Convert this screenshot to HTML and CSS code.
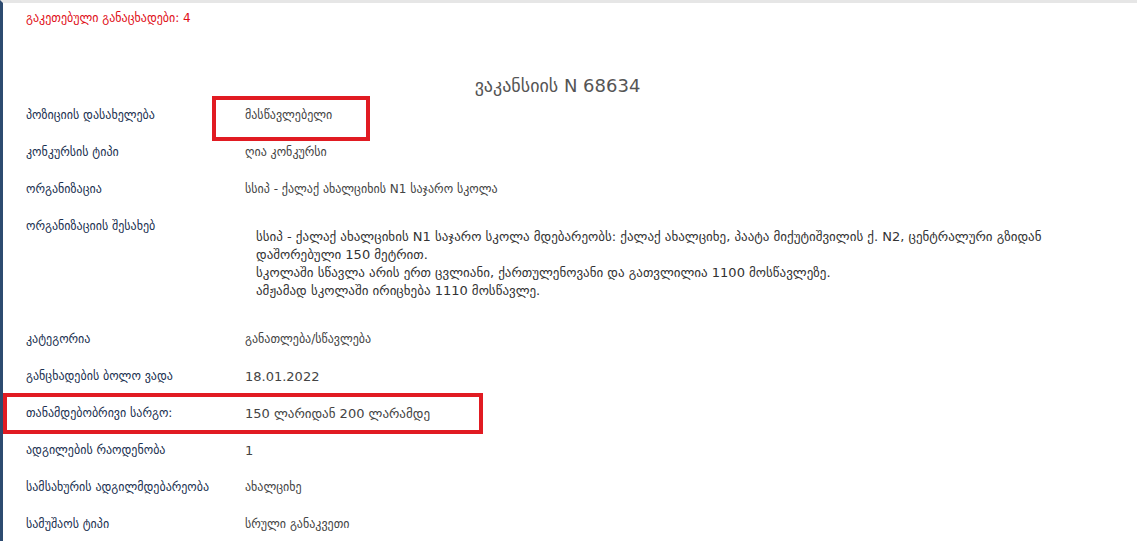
FILE: index.html
```html
<!DOCTYPE html>
<html lang="ka">
<head>
  <meta charset="UTF-8" />
  <meta name="viewport" content="width=device-width, initial-scale=1.0"/>
  <title>ვაკანსია N 68634</title>
  <link rel="stylesheet" href="styles.css">
</head>
<body>
  <div class="page">
    <p class="count">გაკეთებული განაცხადები: 4</p>

    <h2 class="title">ვაკანსიის N 68634</h2>

    <div class="details">
      <div class="row">
        <div class="label">პოზიციის დასახელება</div>
        <div class="value marked">მასწავლებელი<span class="mark"></span></div>
      </div>
      <div class="row">
        <div class="label">კონკურსის ტიპი</div>
        <div class="value">ღია კონკურსი</div>
      </div>
      <div class="row">
        <div class="label">ორგანიზაცია</div>
        <div class="value">სსიპ - ქალაქ ახალციხის N1 საჯარო სკოლა</div>
      </div>
      <div class="row row-long">
        <div class="label">ორგანიზაციის შესახებ</div>
        <div class="value">
          <p class="about">სსიპ - ქალაქ ახალციხის N1 საჯარო სკოლა მდებარეობს: ქალაქ ახალციხე, პაატა მიქუტიშვილის ქ. N2, ცენტრალური გზიდან<br>დაშორებული 150 მეტრით.<br>სკოლაში სწავლა არის ერთ ცვლიანი, ქართულენოვანი და გათვლილია 1100 მოსწავლეზე.<br>ამჟამად სკოლაში ირიცხება 1110 მოსწავლე.</p>
        </div>
      </div>
      <div class="row">
        <div class="label">კატეგორია</div>
        <div class="value">განათლება/სწავლება</div>
      </div>
      <div class="row">
        <div class="label">განცხადების ბოლო ვადა</div>
        <div class="value num">18.01.2022</div>
      </div>
      <div class="row row-marked">
        <div class="label">თანამდებობრივი სარგო:</div>
        <div class="value num">150 ლარიდან 200 ლარამდე</div>
        <span class="mark mark-row"></span>
      </div>
      <div class="row">
        <div class="label">ადგილების რაოდენობა</div>
        <div class="value num">1</div>
      </div>
      <div class="row">
        <div class="label">სამსახურის ადგილმდებარეობა</div>
        <div class="value">ახალციხე</div>
      </div>
      <div class="row">
        <div class="label">სამუშაოს ტიპი</div>
        <div class="value">სრული განაკვეთი</div>
      </div>
    </div>
  </div>
</body>
</html>
```

FILE: styles.css
```css
body {
  margin: 0;
  padding: 0;
  font-family: 'DejaVu Sans', sans-serif;
  background: #fff;
}

.page {
  border-left: 3px solid #2d4b70;
  border-top: 3px solid #e6e6e6;
  min-height: 540px;
  padding-right: 25px;
}

.count {
  margin: 0;
  padding: 7px 0 0 23px;
  font-size: 12px;
  line-height: 16px;
  color: #e00d16;
}

.title {
  margin: 48px 0 0;
  text-align: center;
  font-size: 18px;
  font-weight: normal;
  line-height: 24px;
  color: #555;
}

.details {
  margin-top: -1px;
}

.row {
  position: relative;
  display: grid;
  grid-template-columns: 219px 1fr;
  padding-left: 23px;
}

.label,
.value {
  font-size: 12px;
  line-height: 37px;
}

.label {
  color: #1a3050;
}

.value {
  color: #444;
}

.num {
  font-size: 13px;
}

.row-long {
  height: 113px;
}

.about {
  margin: 0;
  padding: 20px 0 0 11px;
  font-size: 13px;
  line-height: 18px;
  color: #333;
}

.marked {
  position: relative;
}

.mark {
  position: absolute;
  border: 4px solid #e11b22;
  pointer-events: none;
}

.marked .mark {
  left: -33px;
  top: -1px;
  width: 150px;
  height: 37px;
}

.mark-row {
  left: 0;
  top: -2px;
  width: 472px;
  height: 33px;
}
```
